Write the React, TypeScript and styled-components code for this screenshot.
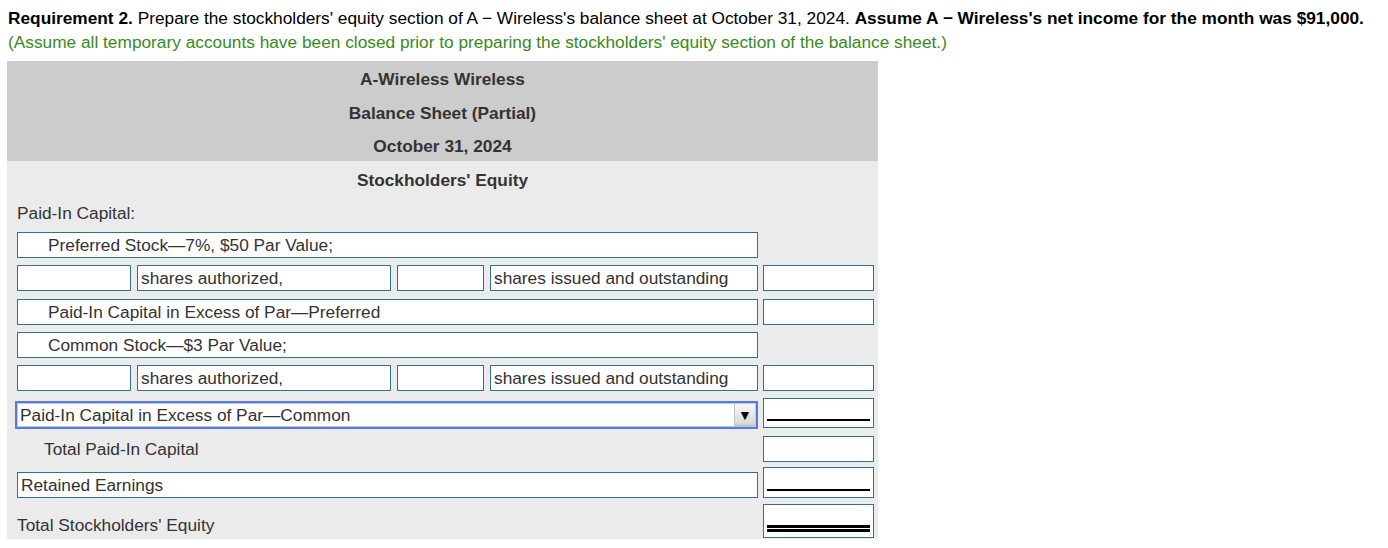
import { FunctionComponent, ReactNode } from "react"
import styled, { createGlobalStyle } from "styled-components"

const GlobalStyle = createGlobalStyle`
	body {
		margin: 0;
		background: #ffffff;
		font-family: "Liberation Sans", Arial, sans-serif;
	}
`

const Intro = styled.div`
	padding: 6px 0 0 8px;
	font-size: 17.3px;
	line-height: 24px;
	color: #000;
`

const Note = styled.div`
	color: #3a8a22;
`

const Panel = styled.div`
	margin: 7px 0 0 7px;
	width: 871px;
	background: #ebebeb;
	color: #333;
	font-size: 17.3px;
`

const Header = styled.div`
	box-sizing: border-box;
	display: flex;
	flex-direction: column;
	height: 100px;
	padding-top: 2px;
	background: #cccccc;
`

const HeaderLine = styled.div`
	flex: 0 0 33.5px;
	display: flex;
	align-items: center;
	justify-content: center;
	font-weight: bold;
`

const Body = styled.div`
	display: flex;
	flex-direction: column;
	padding: 0 4px 1px 10px;
`

const Title = styled.div`
	box-sizing: border-box;
	height: 36px;
	padding-top: 3px;
	line-height: 33px;
	text-align: center;
	font-weight: bold;
	margin-left: -10px;
	margin-right: -4px;
`

const Caption = styled.div`
	height: 32px;
	line-height: 32px;
`

const Row = styled.div<{ $top: number; $align?: string }>`
	display: flex;
	gap: 5px;
	margin-top: ${({ $top }) => $top}px;
	align-items: ${({ $align }) => $align || "stretch"};
`

const Left = styled.div<{ $align?: string }>`
	display: flex;
	gap: 6px;
	width: 741px;
	align-items: ${({ $align }) => $align || "stretch"};
`

const Box = styled.div<{ $w?: number; $pad?: number; $h?: number }>`
	box-sizing: border-box;
	height: ${({ $h }) => $h || 26}px;
	${({ $w }) => ($w ? `width: ${$w}px; flex-shrink: 0;` : "flex: 1;")}
	padding-left: ${({ $pad }) => $pad ?? 3}px;
	background: #fff;
	border: 1px solid #31708f;
	display: flex;
	align-items: center;
	white-space: nowrap;
	overflow: hidden;
`

const Plain = styled.div<{ $pad: number; $bottom?: number }>`
	flex: 1;
	padding-left: ${({ $pad }) => $pad}px;
	padding-bottom: ${({ $bottom }) => $bottom || 0}px;
`

const Amount = styled.div<{ $h?: number; $line?: "single" | "double" }>`
	box-sizing: border-box;
	width: 111px;
	height: ${({ $h }) => $h || 26}px;
	flex-shrink: 0;
	background: #fff;
	border: 1px solid #31708f;
	display: flex;
	align-items: flex-end;
	padding: 0 3px 5px;
	&::after {
		content: "";
		flex: 1;
		${({ $line }) =>
			$line === "single"
				? "border-bottom: 2px solid #000; margin-bottom: 1px;"
				: $line === "double"
				? "height: 1px; border-top: 3px solid #000; border-bottom: 3px solid #000;"
				: ""}
	}
`

const Select = styled.div`
	box-sizing: border-box;
	width: 745px;
	height: 28px;
	margin: 3px 0 0 -2px;
	border: 2px solid #5a7ad6;
	box-shadow: inset 0 0 0 1px #b9c8ef;
	background: #fff;
	display: flex;
	align-items: center;
	padding: 0 1px 0 3px;
`

const SelectText = styled.span`
	flex: 1;
	white-space: nowrap;
`

const Arrow = styled.span`
	box-sizing: border-box;
	width: 21px;
	height: 22px;
	display: flex;
	align-items: center;
	justify-content: center;
	background: linear-gradient(#f8f8f8, #d6d6d6);
	border-left: 1px solid #c4c4c4;
	border-bottom: 1px solid #bdbdbd;
	color: #000;
	font-size: 14px;
`

const Gap = styled.div`
	width: 111px;
	flex-shrink: 0;
`

const Line: FunctionComponent<{ children: ReactNode; top: number }> = ({ children, top }) => (
	<Row $top={top}>
		<Left>
			<Box $pad={30}>{children}</Box>
		</Left>
		<Gap />
	</Row>
)

const SharesRow: FunctionComponent<{ top: number }> = ({ top }) => (
	<Row $top={top}>
		<Left>
			<Box $w={114} />
			<Box $w={254}>shares authorized,</Box>
			<Box $w={87} />
			<Box>shares issued and outstanding</Box>
		</Left>
		<Amount />
	</Row>
)

export default function App() {
	return (
		<>
			<GlobalStyle />
			<Intro>
				<div>
					<b>Requirement 2.</b> Prepare the stockholders' equity section of A − Wireless's balance sheet at
					October 31, 2024. <b>Assume A − Wireless's net income for the month was $91,000.</b>
				</div>
				<Note>
					(Assume all temporary accounts have been closed prior to preparing the stockholders' equity section
					of the balance sheet.)
				</Note>
			</Intro>
			<Panel>
				<Header>
					<HeaderLine>A-Wireless Wireless</HeaderLine>
					<HeaderLine>Balance Sheet (Partial)</HeaderLine>
					<HeaderLine>October 31, 2024</HeaderLine>
				</Header>
				<Body>
					<Title>Stockholders' Equity</Title>
					<Caption>Paid-In Capital:</Caption>
					<Line top={3}>Preferred Stock—7%, $50 Par Value;</Line>
					<SharesRow top={7} />
					<Row $top={8}>
						<Left>
							<Box $pad={30}>Paid-In Capital in Excess of Par—Preferred</Box>
						</Left>
						<Amount />
					</Row>
					<Line top={7}>Common Stock—$3 Par Value;</Line>
					<SharesRow top={7} />
					<Row $top={7} $align="flex-start">
						<Left>
							<Select>
								<SelectText>Paid-In Capital in Excess of Par—Common</SelectText>
								<Arrow>▼</Arrow>
							</Select>
						</Left>
						<Amount $h={30} $line="single" />
					</Row>
					<Row $top={7} $align="center">
						<Left>
							<Plain $pad={27}>Total Paid-In Capital</Plain>
						</Left>
						<Amount />
					</Row>
					<Row $top={5} $align="flex-end">
						<Left>
							<Box>Retained Earnings</Box>
						</Left>
						<Amount $h={31} $line="single" />
					</Row>
					<Row $top={6} $align="flex-end">
						<Left>
							<Plain $pad={0} $bottom={2}>
								Total Stockholders' Equity
							</Plain>
						</Left>
						<Amount $h={34} $line="double" />
					</Row>
				</Body>
			</Panel>
		</>
	)
}
